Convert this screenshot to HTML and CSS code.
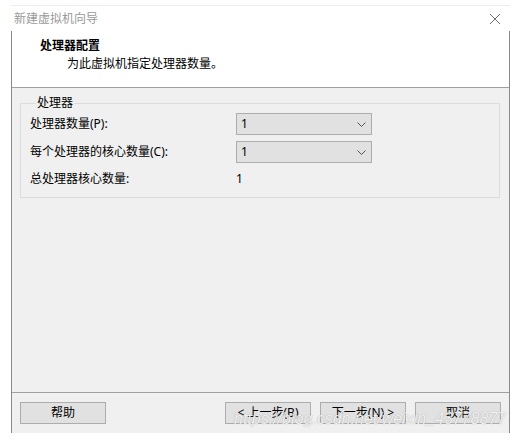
FILE: index.html
```html
<!DOCTYPE html>
<html>
<head>
<meta charset="utf-8">
<link rel="stylesheet" href="styles.css">
</head>
<body>
<div class="window">
  <div class="titlebar">
    <span class="title">新建虚拟机向导</span>
    <svg class="close" width="12" height="12" viewBox="0 0 12 12"><path d="M1 1 L11 11 M11 1 L1 11" stroke="#707070" stroke-width="1" fill="none"/></svg>
  </div>
  <div class="client">
    <div class="header">
      <div class="h-title">处理器配置</div>
      <div class="h-sub">为此虚拟机指定处理器数量。</div>
    </div>
    <div class="body">
      <fieldset class="group">
        <legend>处理器</legend>
        <div class="grid">
          <div class="label">处理器数量(P):</div>
          <div class="combo"><span>1</span><svg width="9" height="5" viewBox="0 0 9 5"><path d="M0.5 0.5 L4.5 4.5 L8.5 0.5" stroke="#555" fill="none"/></svg></div>
          <div class="label">每个处理器的核心数量(C):</div>
          <div class="combo"><span>1</span><svg width="9" height="5" viewBox="0 0 9 5"><path d="M0.5 0.5 L4.5 4.5 L8.5 0.5" stroke="#555" fill="none"/></svg></div>
          <div class="label last">总处理器核心数量:</div>
          <div class="value last">1</div>
        </div>
      </fieldset>
    </div>
    <div class="footer">
      <button class="btn">帮助</button>
      <div class="spacer"></div>
      <button class="btn">&lt; 上一步(B)</button>
      <button class="btn">下一步(N) &gt;</button>
      <button class="btn">取消</button>
      <div class="watermark">https://blog.csdn.net/weixin_43778877</div>
    </div>
  </div>
</div>
</body>
</html>
```
FILE: styles.css
```css
* { box-sizing: border-box; }
html, body { margin: 0; padding: 0; background: #fff; }
body {
  font-family: "Noto Sans", "Noto Sans CJK SC", sans-serif;
  font-size: 12px;
  color: #000;
}
.window {
  margin: 5px 0 0 11px;
  width: 499px;
}
.titlebar {
  height: 26px;
  border-top: 1px solid #ececec;
  display: flex;
  align-items: center;
  justify-content: space-between;
  padding: 0 9px 0 3px;
}
.title { color: #999; font-size: 12px; line-height: 16px; }
.close { display: block; }
.client {
  border-left: 1px solid #8a8a8a;
  border-right: 1px solid #8a8a8a;
  background: #f0f0f0;
  height: 402px;
  display: flex;
  flex-direction: column;
}
.header {
  background: #fff;
  height: 57px;
  border-bottom: 1px solid #a0a0a0;
  padding: 6px 0 0 28px;
}
.h-title { font-weight: bold; line-height: 16px; height: 16px; margin-top: 1px; }
.h-sub { padding-left: 27px; line-height: 16px; margin-top: 2px; }
.body {
  flex: 1;
  padding: 7px 8px 0 8px;
  border-bottom: 1px solid #a0a0a0;
}
.group {
  margin: 0;
  border: 1px solid #dcdcdc;
  padding: 2px 9px 10px 9px;
  width: 480px;
}
.group legend {
  padding: 0 1px;
  margin-left: 6px;
  line-height: 16px;
}
.grid {
  display: grid;
  grid-template-columns: 206px 136px;
  row-gap: 6px;
  align-items: center;
}
.label { line-height: 16px; }
.last { margin-top: 2px; }
.combo {
  height: 22px;
  background: #e1e1e1;
  border: 1px solid #adadad;
  display: flex;
  align-items: center;
  justify-content: space-between;
  padding: 0 5px 0 4px;
  line-height: 16px;
}
.combo svg { display: block; margin-top: 1px; }
.value { line-height: 16px; }
.footer {
  height: 40px;
  display: flex;
  align-items: flex-start;
  padding: 9px 8px 0 8px;
  gap: 9px;
  position: relative;
}
.spacer { flex: 1; }
.btn {
  width: 86px;
  height: 22px;
  background: #e1e1e1;
  border: 1px solid #adadad;
  font-family: inherit;
  font-size: 12px;
  color: #000;
  padding: 0;
  margin: 0;
  line-height: 16px;
}
.watermark {
  position: absolute;
  left: 222px;
  top: 18px;
  font-family: "Liberation Sans", sans-serif;
  font-size: 16px;
  line-height: 16px;
  font-style: italic;
  color: rgba(255,255,255,0.85);
  text-shadow: 0 0 1px rgba(120,120,120,0.7);
  white-space: nowrap;
  pointer-events: none;
}
```
